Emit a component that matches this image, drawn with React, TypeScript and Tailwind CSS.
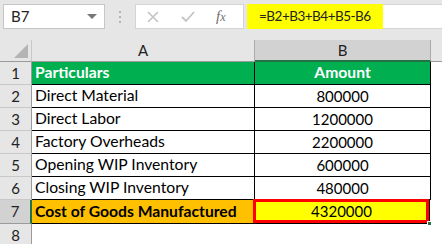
import React from 'react';

const rows = [
  { n: 2, a: 'Direct Material', b: '800000' },
  { n: 3, a: 'Direct Labor', b: '1200000' },
  { n: 4, a: 'Factory Overheads', b: '2200000' },
  { n: 5, a: 'Opening WIP Inventory', b: '600000' },
  { n: 6, a: 'Closing WIP Inventory', b: '480000' },
];

const font = { fontFamily: 'Lato, "Liberation Sans", sans-serif' };

const RowHead = ({ n, active }: { n: number; active?: boolean }) => (
  <div
    className={`w-[32px] shrink-0 flex items-center justify-center border-b text-[15px] text-[#222] ${
      active
        ? 'bg-[#d2d2d2] border-b-[#9b9b9b] border-r-2 border-r-[#217346]'
        : 'bg-[#e6e6e6] border-b-[#c8c8c8] border-r border-r-[#9b9b9b]'
    }`}
  >
    {n}
  </div>
);

export default function App() {
  return (
    <div className="w-[442px] h-[244px] overflow-hidden bg-white" style={font}>
      {/* Formula bar */}
      <div className="h-[40px] bg-[#e6e6e6] flex items-start pt-[4px]">
        <div className="ml-[3px] w-[102px] h-[25px] bg-white border border-[#c6c6c6] flex items-center justify-between pl-[7px] pr-[6px]">
          <span className="text-[15px] text-[#222]">B7</span>
          <span className="w-0 h-0 border-l-[5px] border-r-[5px] border-t-[5px] border-l-transparent border-r-transparent border-t-[#777] mr-[1px]" />
        </div>
        <div className="ml-[14px] mt-[7px] flex flex-col gap-[3px]">
          <span className="w-[2px] h-[2px] bg-[#b4b4b4]" />
          <span className="w-[2px] h-[2px] bg-[#b4b4b4]" />
          <span className="w-[2px] h-[2px] bg-[#b4b4b4]" />
        </div>
        <div className="ml-[14px] w-[109px] h-[25px] bg-white border border-[#d4d4d4] flex items-center">
          <svg width="12" height="12" viewBox="0 0 12 12" className="ml-[11px]">
            <path d="M1 1 L11 11 M11 1 L1 11" stroke="#c4c4c4" strokeWidth="1.6" />
          </svg>
          <svg width="14" height="12" viewBox="0 0 14 12" className="ml-[22px]">
            <path d="M1 6 L5 10 L13 1" stroke="#c4c4c4" strokeWidth="1.8" fill="none" />
          </svg>
          <span className="ml-[21px] text-[15px] italic text-[#6e6e6e]" style={{ fontFamily: '"Liberation Serif", serif' }}>
            f<span className="text-[12px]">x</span>
          </span>
        </div>
        <div className="ml-[3px] flex-1 h-[25px] bg-white border-y border-l border-[#d4d4d4] flex">
          <div className="w-[136px] shrink-0 bg-[#ffff00] flex items-center pl-[12px] text-[13.5px] tracking-[-0.5px] text-[#222] whitespace-nowrap -ml-px -mt-px h-[25px]">
            =B2+B3+B4+B5-B6
          </div>
        </div>
      </div>

      {/* Column headers */}
      <div className="flex h-[22px] bg-[#e6e6e6]">
        <div className="w-[32px] shrink-0 border-r border-r-[#c8c8c8] border-b border-b-[#9b9b9b] flex items-end justify-end pr-[3px] pb-[3px]">
          <svg width="14" height="14" viewBox="0 0 14 14">
            <path d="M14 0 L14 14 L0 14 Z" fill="#b4b4b4" />
          </svg>
        </div>
        <div className="w-[223px] shrink-0 border-r border-r-[#ababab] border-b border-b-[#9b9b9b] flex items-center justify-center text-[15px] text-[#222]">
          A
        </div>
        <div className="w-[176px] shrink-0 bg-[#d2d2d2] border-r border-r-[#ababab] border-b-2 border-b-[#217346] flex items-center justify-center text-[15px] text-[#222]">
          B
        </div>
        <div className="flex-1 border-b border-b-[#9b9b9b]" />
      </div>

      {/* Row 1 */}
      <div className="flex h-[23px]">
        <RowHead n={1} />
        <div className="w-[223px] shrink-0 bg-[#00b050] border-r border-b border-black flex items-center pl-[3px] text-[15.7px] font-bold text-white">
          Particulars
        </div>
        <div className="w-[176px] shrink-0 bg-[#00b050] border-r border-b border-black flex items-center justify-center text-[15.7px] font-bold text-white">
          Amount
        </div>
        <div className="flex-1" />
      </div>

      {rows.map((r) => (
        <div key={r.n} className="flex h-[23px]">
          <RowHead n={r.n} />
          <div className="w-[223px] shrink-0 border-r border-b border-black flex items-center pl-[3px] text-[15.7px] text-black">
            {r.a}
          </div>
          <div className="w-[176px] shrink-0 border-r border-b border-black flex items-center justify-center text-[15px] text-black">
            {r.b}
          </div>
          <div className="flex-1" />
        </div>
      ))}

      {/* Row 7 */}
      <div className="flex h-[24px]">
        <RowHead n={7} active />
        <div className="w-[222px] shrink-0 bg-[#ffc000] border-r border-b border-black flex items-center pl-[3px] text-[15.7px] font-bold text-black">
          Cost of Goods Manufactured
        </div>
        <div className="relative w-[176px] shrink-0 bg-[#ffff00] border-r border-b border-black flex items-center justify-center text-[15px] text-black">
          4320000
          <div className="absolute -left-px -top-px right-0 bottom-0 border-[3px] border-[#ff0000]" />
          <div className="absolute -right-[3px] -bottom-[3px] w-[5px] h-[5px] bg-[#217346] border border-white" />
        </div>
        <div className="flex-1" />
      </div>

      {/* Row 8 */}
      <div className="flex h-[23px]">
        <RowHead n={8} />
        <div className="flex-1" />
      </div>
    </div>
  );
}
